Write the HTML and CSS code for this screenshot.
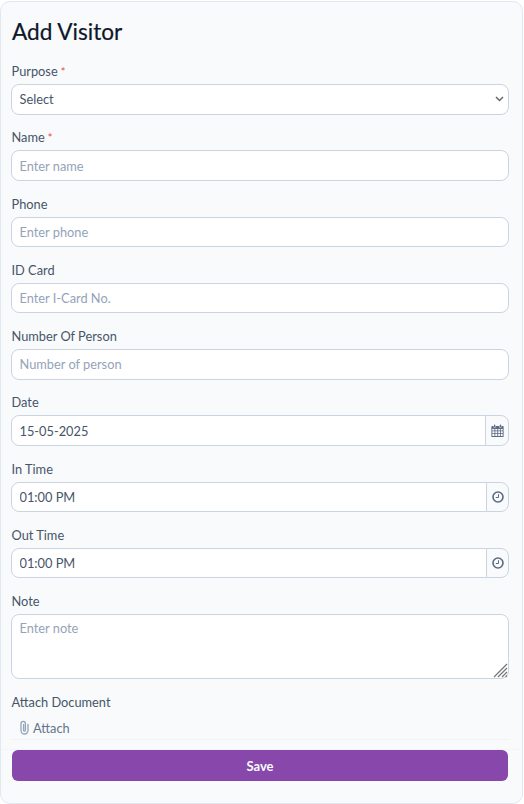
FILE: index.html
```html
<!DOCTYPE html>
<html lang="en">
<head>
<meta charset="utf-8">
<title>Add Visitor</title>
<link rel="stylesheet" href="styles.css">
</head>
<body>
<form class="card">
  <h1 class="title">Add Visitor</h1>
  <div class="field">
    <label class="label">Purpose<span class="req">*</span></label>
    <select class="control select"><option>Select</option></select>
  </div>
  <div class="field">
    <label class="label">Name<span class="req">*</span></label>
    <input class="control" placeholder="Enter name">
  </div>
  <div class="field">
    <label class="label">Phone</label>
    <input class="control" placeholder="Enter phone">
  </div>
  <div class="field">
    <label class="label">ID Card</label>
    <input class="control" placeholder="Enter I-Card No.">
  </div>
  <div class="field">
    <label class="label">Number Of Person</label>
    <input class="control" placeholder="Number of person">
  </div>
  <div class="field">
    <label class="label">Date</label>
    <div class="group">
      <input class="control group-input" value="15-05-2025">
      <span class="addon">
        <svg class="icon" width="13" height="13" viewBox="0 0 13 13" aria-hidden="true">
          <path fill="#5b6b82" fill-rule="evenodd" d="M1 2h1.600v1.400h2V2h3.800v1.400h2V2H12a.6.6 0 0 1 .6.6v9.800a.6.6 0 0 1-.6.6H1a.6.6 0 0 1-.6-.6V2.600A.6.6 0 0 1 1 2zM1.300 5v1.500h2.200V5zm3 0v1.500h2V5zm2.900 0v1.500h2V5zm2.800 0v1.500h1.700V5zM1.300 7.300v1.600h2.200V7.300zm3 0v1.600h2V7.300zm2.900 0v1.600h2V7.300zm2.800 0v1.600h1.700V7.300zM1.300 9.700v2.300h2.200V9.700zm3 0v2.300h2V9.700zm2.900 0v2.300h2V9.700zm2.800 0v2.300h1.700V9.700z"/>
          <rect x="3" y=".6" width="1.300" height="2.400" rx=".6" fill="#5b6b82"/>
          <rect x="8.800" y=".6" width="1.300" height="2.400" rx=".6" fill="#5b6b82"/>
        </svg>
      </span>
    </div>
  </div>
  <div class="field">
    <label class="label">In Time</label>
    <div class="group">
      <input class="control group-input" value="01:00 PM">
      <span class="addon addon-time">
        <svg class="icon" width="12" height="12" viewBox="0 0 12 12" aria-hidden="true">
          <circle cx="6" cy="6" r="5" fill="none" stroke="#5b6b82" stroke-width="1.600"/>
          <path d="M6.500 3.200v3.300H3.800" fill="none" stroke="#5b6b82" stroke-width="1"/>
        </svg>
      </span>
    </div>
  </div>
  <div class="field">
    <label class="label">Out Time</label>
    <div class="group">
      <input class="control group-input" value="01:00 PM">
      <span class="addon addon-time">
        <svg class="icon" width="12" height="12" viewBox="0 0 12 12" aria-hidden="true">
          <circle cx="6" cy="6" r="5" fill="none" stroke="#5b6b82" stroke-width="1.600"/>
          <path d="M6.500 3.200v3.300H3.800" fill="none" stroke="#5b6b82" stroke-width="1"/>
        </svg>
      </span>
    </div>
  </div>
  <div class="field note-field">
    <label class="label">Note</label>
    <div class="note-wrap">
      <textarea class="control note" placeholder="Enter note"></textarea>
      <svg class="grip" width="15" height="15" viewBox="0 0 15 15" aria-hidden="true">
        <path d="M1 14L14 1M5 14L14 5M9 14l5-5M12.500 14l1.500-1.500" fill="none" stroke="#777" stroke-width="1.300"/>
      </svg>
    </div>
  </div>
  <div class="attach-field">
    <label class="label">Attach Document</label>
    <div class="attach">
      <svg class="clip" width="11" height="15" viewBox="0 0 11 15" aria-hidden="true">
        <path d="M9 4.500V10.500a3.500 3.500 0 0 1-7 0V3.500a2.200 2.200 0 0 1 4.400 0V10.300a.9.900 0 0 1-1.800 0V4.500" fill="none" stroke="#94a3b8" stroke-width="1.300" stroke-linecap="round"/>
      </svg>
      <span>Attach</span>
    </div>
  </div>
  <div class="footer">
    <button class="save" type="button">Save</button>
  </div>
</form>
</body>
</html>
```
FILE: styles.css
```css
* { box-sizing: border-box; }
html, body { margin: 0; padding: 0; background: #fff; }
body {
  width: 524px;
  height: 804px;
  overflow: hidden;
  font-family: "Lato", "Noto Sans", sans-serif;
}
.card {
  width: 523px;
  height: 803px;
  margin-top: 1px;
  padding: 16px 13px 0 10px;
  background: #f8fafc;
  border: 1px solid #e2e8f0;
  border-radius: 10px;
}
.title {
  margin: 0 0 14px;
  padding-left: 1px;
  font-size: 22.600px;
  line-height: 28px;
  font-weight: 400;
  color: #0f172a;
  -webkit-text-stroke: .2px #0f172a;
}
.field { height: 66.250px; }
.label {
  display: block;
  height: 24px;
  padding-left: .5px;
  font-size: 12.800px;
  line-height: 22px;
  color: #475569;
}
.req {
  margin-left: 3px;
  font-size: 11px;
  color: #ef4444;
}
.control {
  display: block;
  width: 100%;
  height: 30.500px;
  padding: 0 7.500px;
  font-family: inherit;
  font-size: 12.800px;
  color: #475569;
  background: #fff;
  border: 1px solid #cbd5e1;
  border-radius: 8px;
  outline: none;
}
.control::placeholder { color: #94a3b8; opacity: 1; }
.select {
  appearance: none;
  background-image: url("data:image/svg+xml,%3Csvg xmlns='http://www.w3.org/2000/svg' width='9' height='6' viewBox='0 0 9 6'%3E%3Cpath d='M1 1l3.500 3.500L8 1' fill='none' stroke='%23666' stroke-width='1.500'/%3E%3C/svg%3E");
  background-repeat: no-repeat;
  background-position: right 4px center;
}
.group { display: flex; }
.group-input {
  flex: 1;
  min-width: 0;
  border-radius: 8px 0 0 8px;
}
.addon {
  display: flex;
  align-items: center;
  justify-content: center;
  flex: none;
  width: 24px;
  height: 30.500px;
  margin-left: -1px;
  background: #f8fafc;
  border: 1px solid #cbd5e1;
  border-radius: 0 8px 8px 0;
}
.addon-time { width: 23px; }
.note-field { height: 101px; }
.note-wrap { position: relative; }
.note {
  height: 65px;
  padding: 5px 7.500px;
  resize: none;
}
.grip {
  position: absolute;
  right: 1px;
  bottom: 1px;
}
.attach-field { height: 59px; }
.attach {
  display: flex;
  align-items: center;
  gap: 3px;
  height: 25px;
  padding: 1px 0 0 8px;
  border-bottom: 1px solid #f1f5f9;
  font-size: 12.800px;
  color: #64748b;
}
.footer {
  margin: -1px -13px 0 -10px;
  padding: 0 14px 0 11px;
  border-top: 1px solid #f1f5f9;
}
.save {
  display: block;
  width: 496px;
  height: 31px;
  font-family: inherit;
  font-size: 13px;
  font-weight: 700;
  color: #f8fafc;
  background: #8747ab;
  border: 0;
  border-radius: 6px;
}
```
